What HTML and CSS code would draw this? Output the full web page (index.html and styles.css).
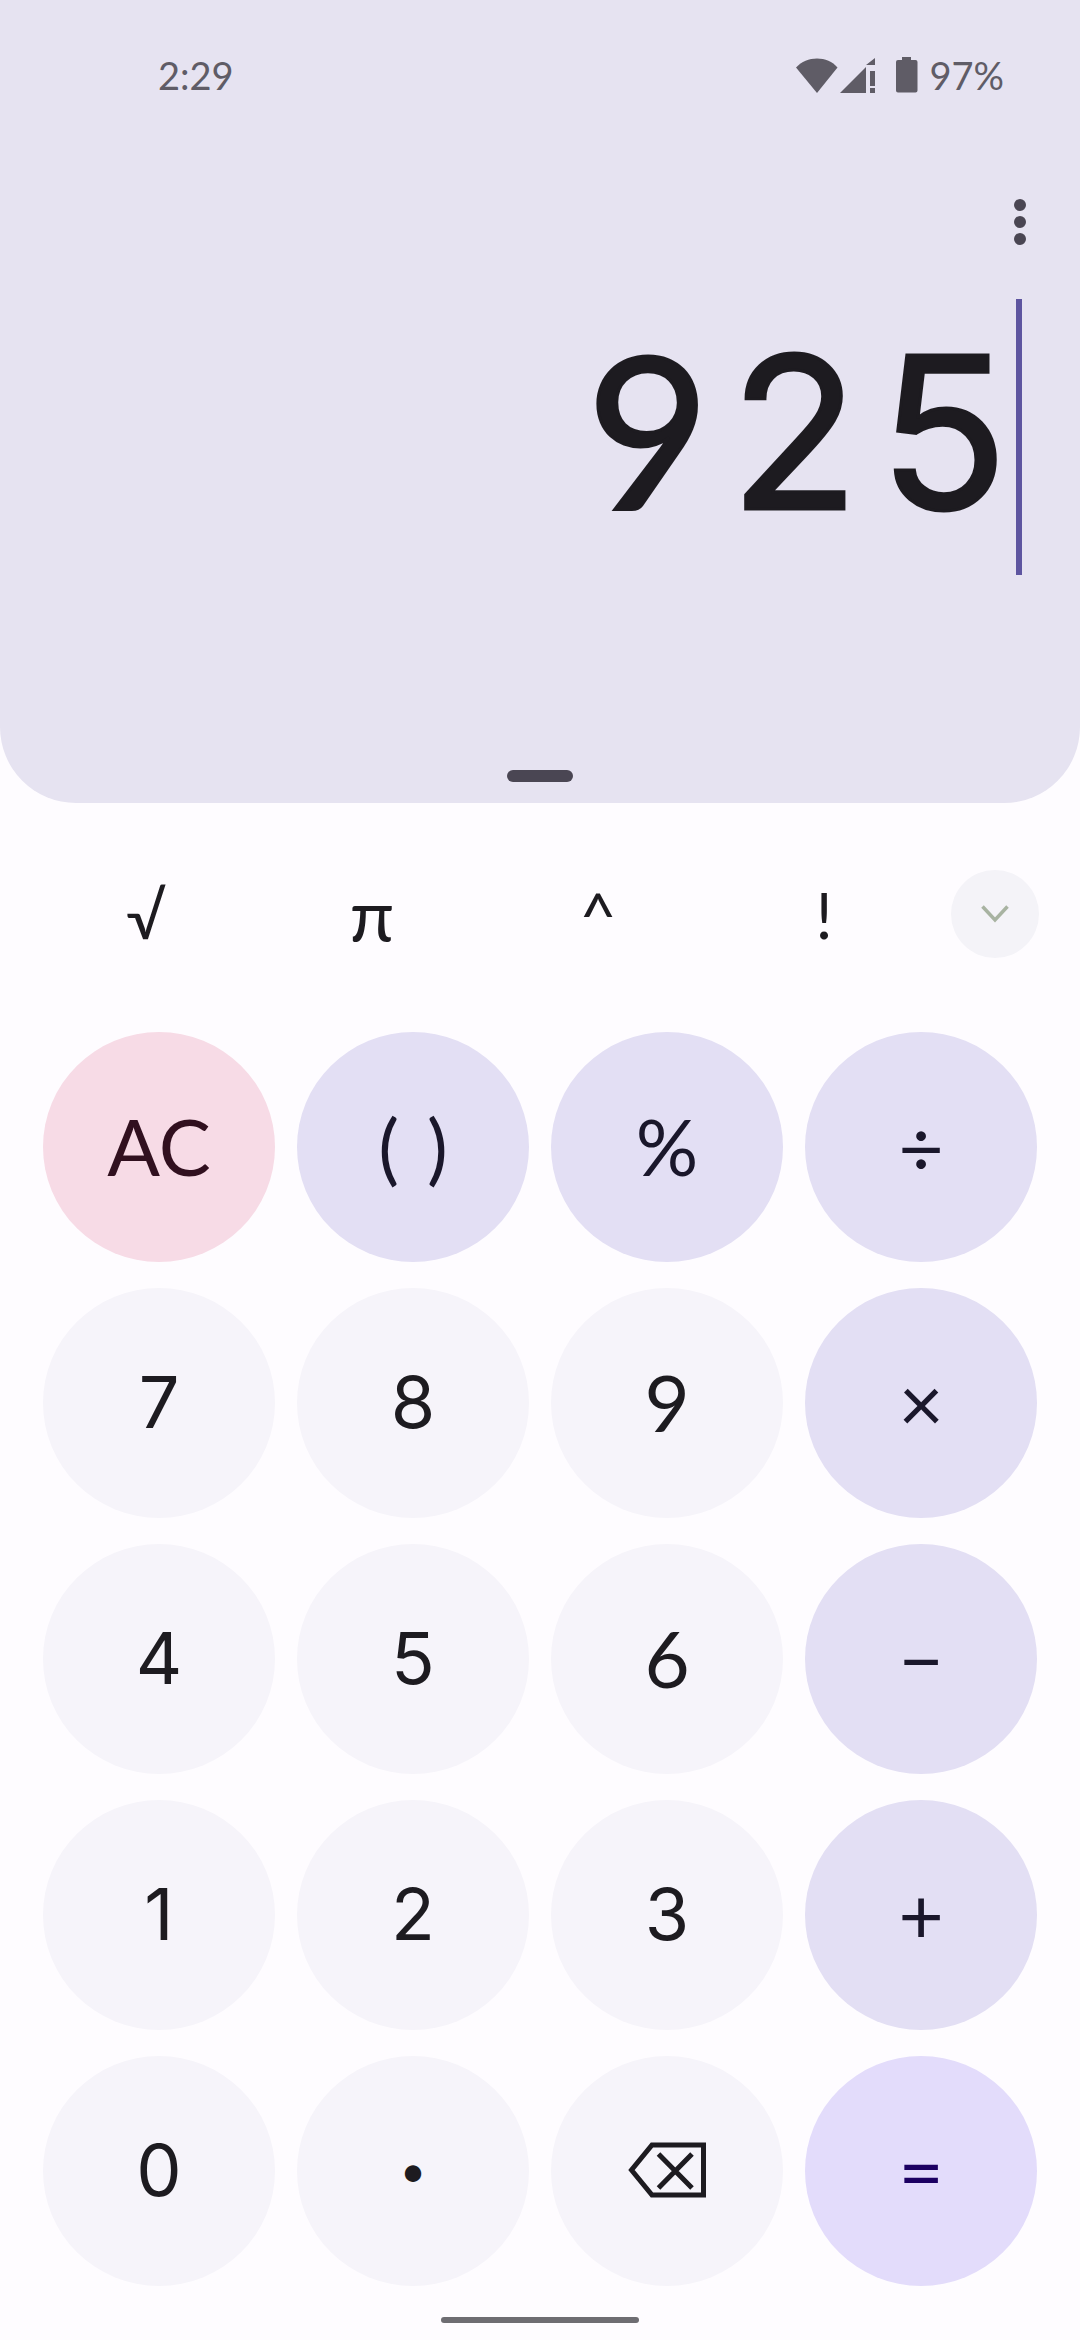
FILE: index.html
```html
<!DOCTYPE html>
<html lang="en">
<head>
    <meta charset="UTF-8">
    <meta name="viewport" content="width=device-width, initial-scale=1.0">
    <title>Calculator</title>
    <link rel="stylesheet" href="styles.css">
</head>
<body>
    <!-- Display panel -->
    <section class="panel">
        <div class="status-bar">
            <span class="time">2:29</span>
            <div class="status-icons">
                <svg class="icon-wifi" width="42" height="35" viewBox="0 0 42 35"><path d="M0 9.500C5.500 3.500 13 0.500 21 0.500C29 0.500 36.500 3.500 41.500 9.500L21 35Z"/></svg>
                <svg class="icon-signal" width="36" height="35" viewBox="0 0 36 35"><path d="M0 35L26 9V35Z"/><path d="M26 7L35 0V7ZM30 13H35V28H30ZM30 30H35V35H30Z"/></svg>
                <svg class="icon-battery" width="22" height="36" viewBox="0 0 22 36"><path d="M6 0H15V3H19.500Q21.500 3 21.500 5V33.500Q21.500 35.500 19.500 35.500H2Q0 35.500 0 33.500V5Q0 3 2 3H6Z"/></svg>
                <span class="battery">97%</span>
            </div>
        </div>

        <div class="menu-row">
            <div class="menu-dots"><i></i><i></i><i></i></div>
        </div>

        <div class="display">
            <span class="value"><span class="lato">9</span>25</span>
            <span class="caret"></span>
        </div>

        <div class="handle"></div>
    </section>

    <!-- Scientific row -->
    <div class="sci-row">
        <span class="sci-key">√</span>
        <span class="sci-key sci-pi">π</span>
        <span class="sci-key">^</span>
        <span class="sci-key">!</span>
        <span class="expand">
            <svg width="28" height="18" viewBox="0 0 28 18"><path d="M1.500 1.500L14 15L26.500 1.500" fill="none" stroke="#a8b3a2" stroke-width="3.500"/></svg>
        </span>
    </div>

    <!-- Keypad -->
    <div class="keypad">
        <button class="key key-clear lato">AC</button>
        <button class="key key-op key-parens lato">( )</button>
        <button class="key key-op lato">%</button>
        <button class="key key-op lato">÷</button>

        <button class="key">7</button>
        <button class="key">8</button>
        <button class="key lato">9</button>
        <button class="key key-op lato">×</button>

        <button class="key">4</button>
        <button class="key">5</button>
        <button class="key lato">6</button>
        <button class="key key-op lato">−</button>

        <button class="key">1</button>
        <button class="key">2</button>
        <button class="key">3</button>
        <button class="key key-op lato">+</button>

        <button class="key">0</button>
        <button class="key key-dot lato">•</button>
        <button class="key">
            <svg width="78" height="56" viewBox="0 0 78 56" fill="none" stroke="#1d1b20" stroke-width="5"><path d="M24 3H75.500V53H24L3.500 28Z"/><path d="M30.500 12L64 46M64 12L30.500 46"/></svg>
        </button>
        <button class="key key-equals lato">=</button>
    </div>

    <div class="nav-pill"></div>
</body>
</html>
```

FILE: styles.css
```css
* {
    box-sizing: border-box;
}

body {
    margin: 0;
    height: 2340px;
    overflow: hidden;
    background: #fefcff;
    color: #1d1b20;
    font-family: 'Inter', sans-serif;
}

.lato {
    font-family: 'Lato', sans-serif;
}

.panel {
    height: 803px;
    background: #e6e3f1;
    border-radius: 0 0 76px 76px;
    display: flex;
    flex-direction: column;
    align-items: stretch;
}

.status-bar {
    display: flex;
    align-items: center;
    justify-content: space-between;
    height: 36px;
    margin-top: 57px;
    padding: 0 76px 0 158px;
    color: #5f5c66;
    font-family: 'Lato', sans-serif;
    font-size: 38px;
}

.status-icons {
    display: flex;
    align-items: center;
}

.status-icons svg {
    fill: #5f5c66;
}

.icon-signal {
    margin-left: 2px;
}

.icon-battery {
    margin-left: 20px;
}

.battery {
    margin-left: 11px;
}

.menu-row {
    display: flex;
    justify-content: flex-end;
    padding: 106px 54px 0 0;
}

.menu-dots {
    display: flex;
    flex-direction: column;
    gap: 5px;
}

.menu-dots i {
    display: block;
    width: 12px;
    height: 12px;
    border-radius: 50%;
    background: #4a4653;
}

.display {
    display: flex;
    align-items: center;
    justify-content: flex-end;
    height: 276px;
    margin-top: 54px;
    padding-right: 58px;
}

.value {
    font-size: 212px;
    letter-spacing: 20px;
    line-height: 1;
    color: #1d1b20;
    -webkit-text-stroke: 3px #1d1b20;
    margin-bottom: 16px;
}

.caret {
    width: 6px;
    height: 276px;
    margin-left: -12px;
    background: #5e55a0;
}

.handle {
    width: 66px;
    height: 12px;
    margin: 195px auto 0;
    border-radius: 6px;
    background: #4a4653;
}

.sci-row {
    display: flex;
    align-items: center;
    height: 88px;
    margin-top: 67px;
    padding-left: 33px;
    font-family: 'Lato', sans-serif;
}

.sci-key {
    width: 226px;
    text-align: center;
    font-size: 64px;
}

.sci-pi {
    font-size: 72px;
    line-height: 64px;
}

.expand {
    width: 88px;
    height: 88px;
    margin-left: 14px;
    border-radius: 50%;
    background: #f4f3f8;
    display: flex;
    align-items: center;
    justify-content: center;
}

.keypad {
    display: grid;
    grid-template-columns: repeat(4, 232px);
    grid-auto-rows: 230px;
    column-gap: 22px;
    row-gap: 26px;
    margin-top: 74px;
    padding-left: 43px;
}

.key {
    border: none;
    border-radius: 50%;
    background: #f6f4fa;
    color: #1d1b20;
    font-family: 'Inter', sans-serif;
    font-size: 72px;
    display: flex;
    align-items: center;
    justify-content: center;
    padding: 0 0 3px;
}

.key.lato {
    font-family: 'Lato', sans-serif;
    font-size: 78px;
}

.key-op {
    background: #e3dff4;
    color: #1a172b;
}

.key-parens {
    word-spacing: 8px;
}

.key-clear {
    background: #f7dbe6;
    color: #31101f;
}

.key-equals {
    background: #e3dcfb;
    color: #1c0062;
}

.key.key-dot {
    font-size: 44px;
}

.nav-pill {
    width: 198px;
    height: 6px;
    margin: 31px auto 0;
    border-radius: 3px;
    background: #6e6d72;
}
```
